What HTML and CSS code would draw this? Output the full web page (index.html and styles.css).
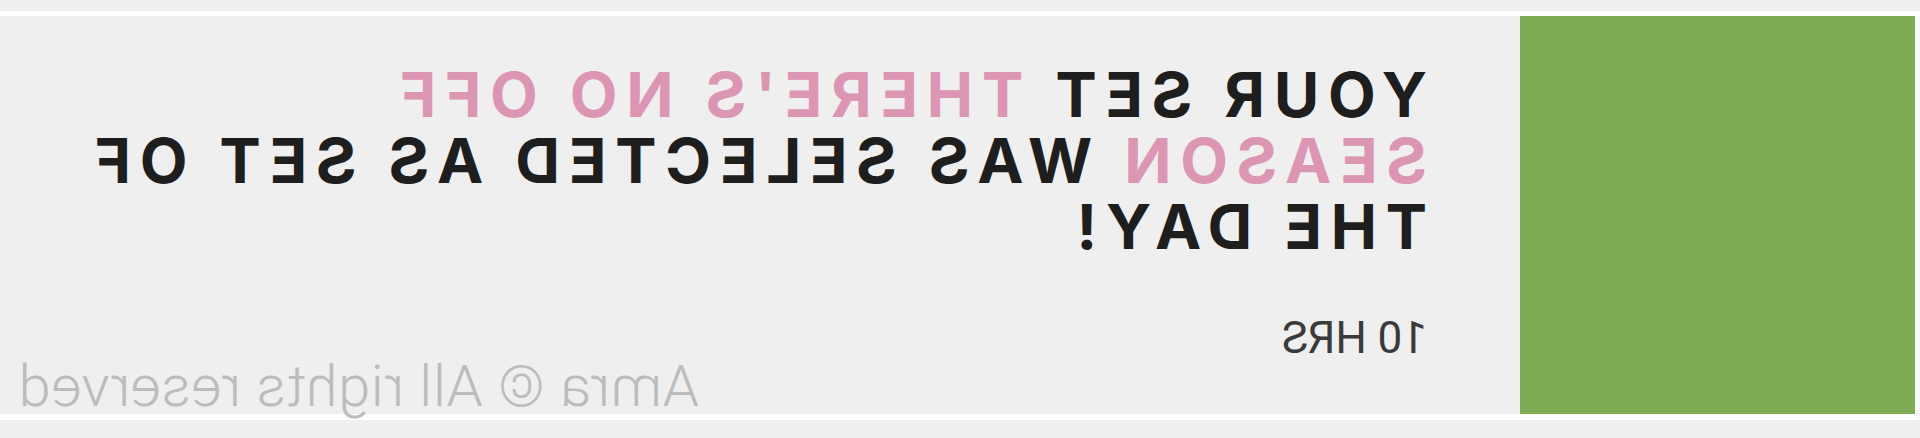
FILE: index.html
```html
<!DOCTYPE html>
<html lang="en">
<head>
<meta charset="utf-8">
<title>Set of the day</title>
<link rel="stylesheet" href="styles.css">
</head>
<body>
<div class="page">
  <div class="topstrip"></div>
  <section class="card">
    <div class="thumb"></div>
    <div class="content">
      <h1 class="title">YOUR SET <span class="accent">THERE'S NO OFF</span><br><span class="accent">SEASON</span> WAS SELECTED AS SET OF<br>THE DAY!</h1>
      <div class="time">10 HRS</div>
      <div class="footer">Amra © All rights reserved</div>
    </div>
  </section>
  <div class="bottomstrip"></div>
</div>
</body>
</html>
```
FILE: styles.css
```css
html, body {
  margin: 0;
  padding: 0;
  background: #efefef;
}
body {
  width: 1920px;
  height: 438px;
  overflow: hidden;
}
.page {
  width: 1920px;
  height: 438px;
  transform: scaleX(-1);
  display: flex;
  flex-direction: column;
}
.topstrip {
  height: 11px;
  background: #efefef;
  border-bottom: 5px solid #ffffff;
}
.card {
  height: 398px;
  display: flex;
  background: #efefef;
  border-bottom: 6px solid #ffffff;
  border-left: 5px solid #f8f8f8;
}
.thumb {
  width: 395px;
  flex: 0 0 395px;
  background: #80ab55;
}
.content {
  flex: 1;
  display: flex;
  flex-direction: column;
  padding-left: 93px;
  padding-top: 46px;
}
.title {
  margin: 0;
  font-family: Inter, sans-serif;
  font-weight: 700;
  font-size: 62px;
  line-height: 66px;
  letter-spacing: 8.7px;
  color: #1e1e1e;
}
.accent {
  color: #dc95b2;
}
.time {
  margin-top: 52px;
  font-family: Roboto, sans-serif;
  font-size: 44px;
  color: #3a3a3a;
}
.footer {
  align-self: flex-end;
  margin-right: 18px;
  margin-top: -6px;
  font-family: Roboto, sans-serif;
  font-weight: 300;
  font-size: 58px;
  line-height: 57px;
  letter-spacing: 0.6px;
  color: #bcbcbc;
}
```
